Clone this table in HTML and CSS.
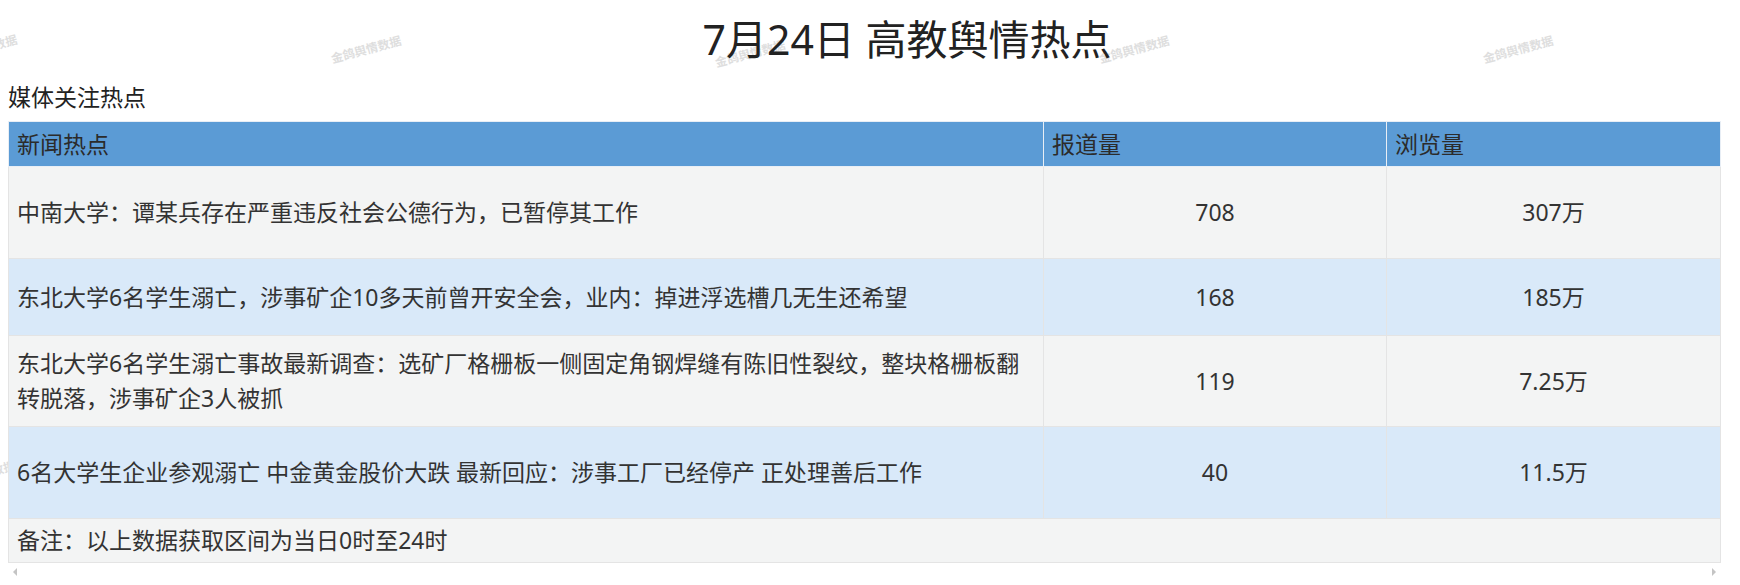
FILE: index.html
```html
<!DOCTYPE html>
<html lang="zh-CN">
<head>
<meta charset="utf-8">
<title>7月24日 高教舆情热点</title>
<link rel="stylesheet" href="styles.css">
</head>
<body>
<div class="watermarks" aria-hidden="true">
  <span class="wm wm-1">金鸽舆情数据</span>
  <span class="wm wm-2">金鸽舆情数据</span>
  <span class="wm wm-3">金鸽舆情数据</span>
  <span class="wm wm-4">金鸽舆情数据</span>
  <span class="wm wm-5">金鸽舆情数据</span>
  <span class="wm wm-6">金鸽舆情数据</span>
</div>
<main class="page">
  <h1 class="title">7月24日 高教舆情热点</h1>
  <div class="subtitle">媒体关注热点</div>
  <div class="table-wrap">
    <table class="hot">
      <colgroup>
        <col class="c-news">
        <col class="c-count">
        <col class="c-views">
      </colgroup>
      <thead>
        <tr class="head"><th>新闻热点</th><th>报道量</th><th>浏览量</th></tr>
      </thead>
      <tbody>
        <tr class="odd h92"><td>中南大学：谭某兵存在严重违反社会公德行为，已暂停其工作</td><td class="num">708</td><td class="num">307万</td></tr>
        <tr class="even h77"><td>东北大学6名学生溺亡，涉事矿企10多天前曾开安全会，业内：掉进浮选槽几无生还希望</td><td class="num">168</td><td class="num">185万</td></tr>
        <tr class="odd h91"><td>东北大学6名学生溺亡事故最新调查：选矿厂格栅板一侧固定角钢焊缝有陈旧性裂纹，整块格栅板翻转脱落，涉事矿企3人被抓</td><td class="num">119</td><td class="num">7.25万</td></tr>
        <tr class="even h92"><td>6名大学生企业参观溺亡 中金黄金股价大跌 最新回应：涉事工厂已经停产 正处理善后工作</td><td class="num">40</td><td class="num">11.5万</td></tr>
        <tr class="odd note"><td colspan="3">备注：以上数据获取区间为当日0时至24时</td></tr>
      </tbody>
    </table>
    <div class="scrollbar"><span class="arrow arrow-left"></span><span class="arrow arrow-right"></span></div>
  </div>
</main>
</body>
</html>
```
FILE: styles.css
```css
html, body {
  margin: 0;
  padding: 0;
  background: #ffffff;
}
body {
  position: relative;
  width: 1740px;
  height: 585px;
  overflow: hidden;
  font-family: "Noto Sans", "Noto Sans CJK SC", sans-serif;
  color: #333333;
}
.watermarks {
  position: absolute;
  inset: 0;
  z-index: 0;
  pointer-events: none;
}
.wm {
  position: absolute;
  font-family: "Noto Sans CJK SC", sans-serif;
  font-size: 12px;
  font-weight: 700;
  line-height: 14px;
  color: #dedede;
  white-space: nowrap;
  transform: rotate(-15deg);
}
.wm-1 { left: -54px; top: 41px; }
.wm-2 { left: 330px; top: 42px; }
.wm-3 { left: 714px; top: 46px; }
.wm-4 { left: 1098px; top: 42px; }
.wm-5 { left: 1482px; top: 42px; }
.wm-6 { left: -56px; top: 467px; }

.page {
  position: relative;
  z-index: 1;
  padding: 0 8px;
}
.title {
  margin: 0;
  padding: 14px 0 0 74px;
  font-size: 41px;
  font-weight: 400;
  line-height: 50px;
  text-align: center;
  color: #222222;
}
.subtitle {
  margin-top: 18px;
  font-size: 23px;
  line-height: 30px;
  color: #222222;
}
.table-wrap {
  margin-top: 9px;
  width: 1712px;
}
.hot {
  width: 1712px;
  table-layout: fixed;
  border-collapse: collapse;
  border: 1px solid #dddddd;
  font-size: 23px;
  line-height: 35px;
}
.c-news { width: 1035px; }
.c-count { width: 343px; }
.c-views { width: 334px; }
.hot th,
.hot td {
  border: 1px solid #e4e4e4;
  padding: 0 8px;
  vertical-align: middle;
}
.hot th {
  height: 44px;
  text-align: left;
  font-weight: 400;
  background: #5b9bd5;
  color: #2b2b2b;
  border-color: #e8eef5;
}
.hot .num { text-align: center; }
.odd td { background: #f3f4f4; }
.even td { background: #d9e9f9; }
.h92 td { height: 91px; }
.h77 td { height: 76px; }
.h91 td { height: 90px; }
.note td { height: 43px; }

.scrollbar {
  display: flex;
  justify-content: space-between;
  align-items: center;
  height: 18px;
  padding: 0 4px 0 5px;
}
.arrow {
  width: 0;
  height: 0;
  border-top: 4px solid transparent;
  border-bottom: 4px solid transparent;
}
.arrow-left { border-right: 4px solid #c4c4c4; }
.arrow-right { border-left: 4px solid #c4c4c4; }
```
